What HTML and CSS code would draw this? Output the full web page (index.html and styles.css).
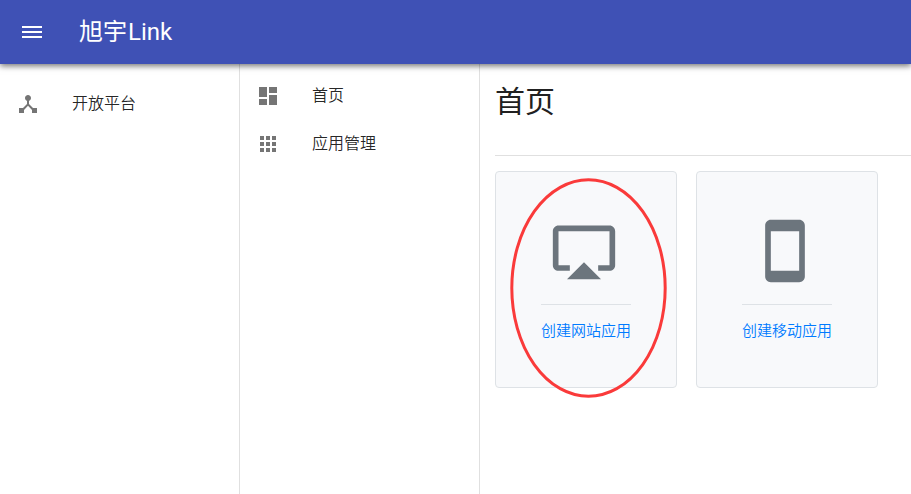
FILE: index.html
```html
<!DOCTYPE html>
<html lang="zh-CN">
<head>
<meta charset="utf-8">
<title>旭宇Link</title>
<link rel="stylesheet" href="styles.css">
</head>
<body>
<header class="toolbar">
  <svg class="icon menu" viewBox="0 0 24 24"><path d="M2 18h20v-2H2v2zm0-5h20v-2H2v2zm0-7v2h20V6H2z"/></svg>
  <span class="brand">旭宇<span class="latin">Link</span></span>
</header>
<div class="layout">
  <nav class="side side-main">
    <a class="item"><svg class="icon" viewBox="0 0 24 24"><path d="M17 16l-4-4V8.820C14.160 8.400 15 7.300 15 6c0-1.660-1.340-3-3-3S9 4.340 9 6c0 1.300.840 2.400 2 2.820V12l-4 4H3v5h5v-3.050l4-4.200 4 4.200V21h5v-5h-4z"/></svg><span>开放平台</span></a>
  </nav>
  <nav class="side side-sub">
    <a class="item"><svg class="icon" viewBox="0 0 24 24"><path d="M3 13h8V3H3v10zm0 8h8v-6H3v6zm10 0h8V11h-8v10zm0-18v6h8V3h-8z"/></svg><span>首页</span></a>
    <a class="item"><svg class="icon" viewBox="0 0 24 24"><path d="M4 8h4V4H4v4zm6 12h4v-4h-4v4zm-6 0h4v-4H4v4zm0-6h4v-4H4v4zm6 0h4v-4h-4v4zm6-10v4h4V4h-4zm-6 4h4V4h-4v4zm6 6h4v-4h-4v4zm0 6h4v-4h-4v4z"/></svg><span>应用管理</span></a>
  </nav>
  <main class="content">
    <h2 class="title">首页</h2>
    <div class="cards">
      <section class="card">
        <svg class="card-icon" viewBox="0 0 24 24"><path d="M6 22h12l-6-6zM21 3H3c-1.100 0-2 .9-2 2v12c0 1.100.9 2 2 2h4v-2H3V5h18v12h-4v2h4c1.100 0 2-.9 2-2V5c0-1.100-.9-2-2-2z"/></svg>
        <a class="card-link">创建网站应用</a>
        <svg class="marker" viewBox="0 0 158 222"><ellipse cx="78.500" cy="111" rx="76.700" ry="108.200"/></svg>
      </section>
      <section class="card">
        <svg class="card-icon" viewBox="0 0 24 24"><path d="M17 1.010L7 1c-1.100 0-2 .9-2 2v18c0 1.100.9 2 2 2h10c1.100 0 2-.9 2-2V3c0-1.100-.9-1.990-2-1.990zM17 19H7V5h10v14z"/></svg>
        <a class="card-link">创建移动应用</a>
      </section>
    </div>
  </main>
</div>
</body>
</html>
```
FILE: styles.css
```css
* { box-sizing: border-box; }
body { margin: 0; height: 494px; overflow: hidden; background: #fff; color: #212121; font-family: Roboto, "Noto Sans CJK SC", sans-serif; }
.toolbar { position: relative; z-index: 2; display: flex; align-items: center; height: 64px; padding-left: 20px; background: #3f51b5; color: #fff; box-shadow: 0 2px 6px rgba(0,0,0,.55); }
.icon { width: 24px; height: 24px; flex: none; fill: #757575; }
.icon.menu { fill: #fff; }
.brand { margin-left: 35px; font-size: 24px; font-weight: 400; line-height: 32px; }
.latin { margin-left: 1px; }
.layout { display: flex; height: 430px; }
.side { width: 240px; flex: none; border-right: 1px solid #e0e0e0; }
.side-main { padding-top: 16px; }
.side-sub { padding-top: 8px; }
.item { display: flex; align-items: center; height: 48px; padding-left: 16px; font-size: 16px; font-weight: 350; line-height: 24px; color: rgba(0,0,0,.87); }
.item span { margin-left: 32px; }
.content { flex: 1; padding: 16px 0 0 15px; min-width: 0; }
.title { height: 76px; margin: 0; border-bottom: 1px solid #e0e0e0; font-size: 30px; font-weight: 400; line-height: 44px; }
.cards { display: flex; gap: 19px; padding-top: 15px; }
.card { position: relative; display: flex; flex-direction: column; align-items: center; flex: none; width: 182px; height: 217px; padding-top: 45px; border: 1px solid #dee2e6; border-radius: 4px; background: #f8f9fb; }
.card-icon { width: 68px; height: 68px; margin-right: 4px; fill: #6c757d; }
.card-link { margin-top: 19px; padding-top: 14px; border-top: 1px solid #dee2e6; color: #007bff; font-size: 15px; font-weight: 350; line-height: 24px; }
.marker { position: absolute; left: 14px; top: 5px; width: 158px; height: 222px; fill: none; stroke: #fa3a3a; stroke-width: 3; }
```
